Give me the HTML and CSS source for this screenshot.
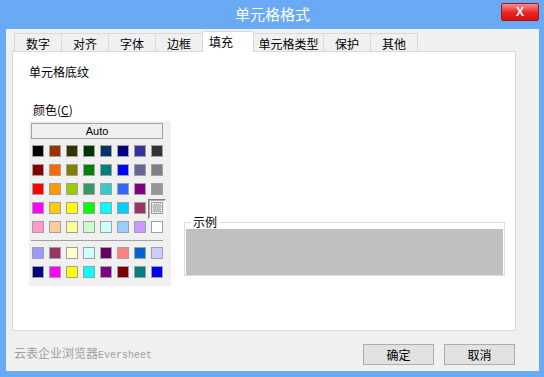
FILE: index.html
```html
<!DOCTYPE html>
<html lang="zh-CN">
<head>
    <meta charset="UTF-8">
    <title>单元格格式</title>
    <link rel="stylesheet" href="styles.css">
</head>
<body>
    <div class="window">
        <div class="titlebar">
            <span class="title">单元格格式</span>
            <button class="close">X</button>
        </div>
        <div class="content">
            <div class="tabs">
                <div class="tab">数字</div>
                <div class="tab">对齐</div>
                <div class="tab">字体</div>
                <div class="tab">边框</div>
                <div class="tab active">填充</div>
                <div class="tab w70">单元格类型</div>
                <div class="tab">保护</div>
                <div class="tab">其他</div>
            </div>
            <div class="pane">
                <div class="section-title">单元格底纹</div>
                <div class="fill-row">
                    <div class="color-col">
                        <div class="color-label">颜色(<u>C</u>)</div>
                        <div class="palette">
                            <button class="auto">Auto</button>
                            <div class="swatches" id="main-swatches"></div>
                            <div class="sep"></div>
                            <div class="swatches" id="extra-swatches"></div>
                        </div>
                    </div>
                    <fieldset class="sample">
                        <legend>示例</legend>
                        <div class="sample-fill"></div>
                    </fieldset>
                </div>
            </div>
            <div class="footer">
                <span class="brand">云表企业浏览器<span class="latin">Eversheet</span></span>
                <div class="buttons">
                    <button class="btn">确定</button>
                    <button class="btn">取消</button>
                </div>
            </div>
        </div>
    </div>

    <script>
        const mainColors = [
            '#000000', '#993300', '#333300', '#003300', '#003366', '#000080', '#333399', '#333333',
            '#800000', '#ff6600', '#808000', '#008000', '#008080', '#0000ff', '#666699', '#808080',
            '#ff0000', '#ff9900', '#99cc00', '#339966', '#33cccc', '#3366ff', '#800080', '#969696',
            '#ff00ff', '#ffcc00', '#ffff00', '#00ff00', '#00ffff', '#00ccff', '#993366', '#c0c0c0',
            '#ff99cc', '#ffcc99', '#ffff99', '#ccffcc', '#ccffff', '#99ccff', '#cc99ff', '#ffffff'
        ];
        const extraColors = [
            '#9999ff', '#993366', '#ffffcc', '#ccffff', '#660066', '#ff8080', '#0066cc', '#ccccff',
            '#000080', '#ff00ff', '#ffff00', '#00ffff', '#800080', '#800000', '#008080', '#0000ff'
        ];

        function fillSwatches(id, colors, selected) {
            const box = document.getElementById(id);
            colors.forEach((c, i) => {
                const sw = document.createElement('span');
                sw.className = 'swatch' + (i === selected ? ' selected' : '');
                sw.style.background = c;
                box.appendChild(sw);
            });
        }

        fillSwatches('main-swatches', mainColors, 31);
        fillSwatches('extra-swatches', extraColors, -1);
    </script>
</body>
</html>
```

FILE: styles.css
```css
body {
    margin: 0;
    font-family: "Noto Sans CJK SC", "Liberation Sans", sans-serif;
    font-size: 12px;
    color: #000;
}
.window {
    width: 544px;
    height: 377px;
    box-sizing: border-box;
    padding: 0 5px 6px 6px;
    background: #6aaaf4;
    display: flex;
    flex-direction: column;
}
.titlebar {
    height: 29px;
    position: relative;
    display: flex;
    align-items: center;
    justify-content: center;
}
.title {
    color: #fff;
    font-size: 15px;
    line-height: 15px;
    margin-top: -2px;
}
.close {
    position: absolute;
    right: 0;
    top: 3px;
    width: 38px;
    height: 18px;
    padding: 0;
    border: 1px solid #a31414;
    border-radius: 2px;
    background: linear-gradient(#f88d8d, #e92424 55%, #dd1010);
    color: #fff;
    font-family: "Liberation Sans", sans-serif;
    font-weight: bold;
    font-size: 12px;
    line-height: 16px;
}
.content {
    flex: 1;
    background: #f0f0f0;
    padding: 2px 23px 0 6px;
    display: flex;
    flex-direction: column;
}
.tabs {
    display: flex;
    align-items: flex-end;
    margin-left: 2px;
    height: 20px;
    position: relative;
    z-index: 1;
}
.tab {
    width: 48px;
    height: 18px;
    box-sizing: border-box;
    border: 1px solid #d9d9d9;
    border-bottom: none;
    margin-right: -1px;
    text-align: center;
    line-height: 19px;
    background: #f0f0f0;
}
.tab.w70 {
    width: 71px;
}
.tab.active {
    width: 52px;
    height: 21px;
    margin-bottom: -1px;
    background: #fff;
    text-align: left;
    padding-left: 6px;
    line-height: 20px;
}
.pane {
    height: 280px;
    box-sizing: border-box;
    border: 1px solid #d9d9d9;
    background: #fff;
    padding: 14px 0 0 16px;
}
.section-title {
    line-height: 12px;
}
.fill-row {
    display: flex;
    margin-top: 26px;
}
.color-label {
    line-height: 12px;
    margin-left: 4px;
}
.color-label u {
    text-underline-offset: 1px;
}
.palette {
    margin-top: 5px;
    width: 142px;
    box-sizing: border-box;
    background: #f0f0f0;
    padding: 2px 0 8px 2px;
}
.auto {
    display: block;
    width: 132px;
    height: 16px;
    padding: 0;
    border: 1px solid #a0a0a0;
    background: #f0f0f0;
    font-family: "Liberation Sans", sans-serif;
    font-size: 11px;
    line-height: 14px;
    color: #000;
}
.swatches {
    display: grid;
    grid-template-columns: repeat(8, 12px);
    column-gap: 5px;
    row-gap: 7px;
    margin: 6px 0 0 1px;
}
.swatch {
    width: 12px;
    height: 12px;
    box-sizing: border-box;
    border: 1px solid #a0a0a0;
    position: relative;
}
.swatch.selected {
    outline: 1px dotted #fff;
    outline-offset: -2px;
}
.swatch.selected::after {
    content: "";
    position: absolute;
    left: -4px;
    top: -4px;
    width: 16px;
    height: 18px;
    border: 1px solid;
    border-color: #808080 #fff #fff #808080;
    box-shadow: inset 1px 1px 0 #b0b0b0;
}
.sep {
    height: 1px;
    width: 132px;
    background: #a0a0a0;
    margin-top: 7px;
}
.sep + .swatches {
    margin-top: 6px;
}
.sample {
    margin: 112px 0 0 13px;
    padding: 0 1px 1px 1px;
    width: 321px;
    box-sizing: border-box;
    height: 60px;
    border: 1px solid #dcdcdc;
    align-self: flex-start;
}
.sample legend {
    padding: 0 2px;
    margin-left: 5px;
    line-height: 12px;
}
.sample-fill {
    height: 46px;
    margin-top: 1px;
    background: #c0c0c0;
}
.footer {
    flex: 1;
    display: flex;
    align-items: center;
    justify-content: space-between;
    padding: 7px 1px 0 2px;
}
.brand {
    color: #a0a0a0;
    line-height: 12px;
}
.brand .latin {
    font-family: "Liberation Mono", monospace;
    font-size: 10px;
}
.buttons {
    display: flex;
    gap: 10px;
}
.btn {
    width: 71px;
    height: 21px;
    padding: 0;
    border: 1px solid #adadad;
    background: #e1e1e1;
    font-family: "Noto Sans CJK SC", sans-serif;
    font-size: 12px;
    color: #000;
}
```
